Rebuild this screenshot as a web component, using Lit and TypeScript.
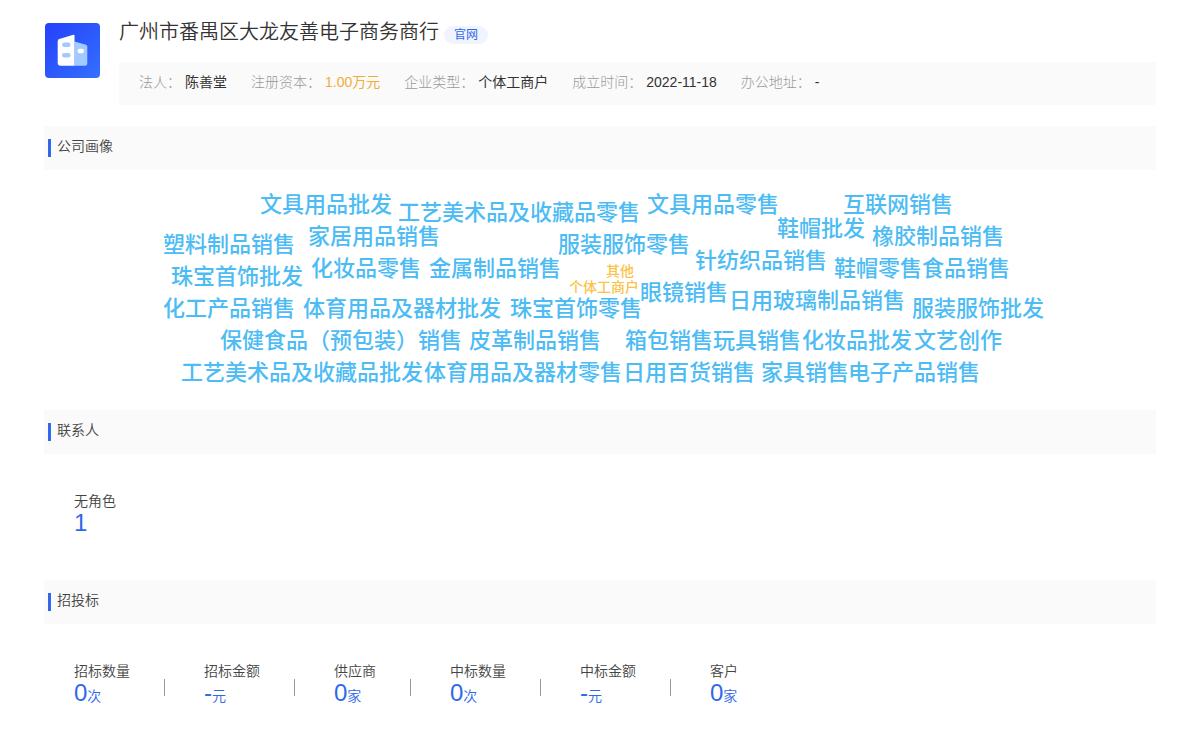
import { LitElement, html, css, svg } from "lit";
import { customElement, property } from "lit/decorators.js";
import { classMap } from "lit/directives/class-map.js";
import { styleMap } from "lit/directives/style-map.js";

interface Fact {
  label: string;
  value: string;
  accent?: boolean;
}

interface Stat {
  label: string;
  value: string;
  unit: string;
}

interface Word {
  text: string;
  x: number;
  y: number;
  small?: boolean;
}

const FACTS: Fact[] = [
  { label: "法人", value: "陈善堂" },
  { label: "注册资本", value: "1.00万元", accent: true },
  { label: "企业类型", value: "个体工商户" },
  { label: "成立时间", value: "2022-11-18" },
  { label: "办公地址", value: "-" },
];

const CONTACTS: Stat[] = [{ label: "无角色", value: "1", unit: "" }];

const BIDS: Stat[] = [
  { label: "招标数量", value: "0", unit: "次" },
  { label: "招标金额", value: "-", unit: "元" },
  { label: "供应商", value: "0", unit: "家" },
  { label: "中标数量", value: "0", unit: "次" },
  { label: "中标金额", value: "-", unit: "元" },
  { label: "客户", value: "0", unit: "家" },
];

// x is measured from the centre of the cloud, y from its top to the middle of the word.
const WORDS: Word[] = [
  { text: "文具用品批发", x: -340, y: 35 },
  { text: "工艺美术品及收藏品零售", x: -202, y: 43 },
  { text: "文具用品零售", x: 47, y: 35 },
  { text: "互联网销售", x: 243, y: 35 },
  { text: "鞋帽批发", x: 177, y: 59 },
  { text: "橡胶制品销售", x: 272, y: 67 },
  { text: "塑料制品销售", x: -437, y: 75 },
  { text: "家居用品销售", x: -292, y: 67 },
  { text: "服装服饰零售", x: -42, y: 75 },
  { text: "针纺织品销售", x: 95, y: 91 },
  { text: "鞋帽零售", x: 234, y: 99 },
  { text: "食品销售", x: 322, y: 99 },
  { text: "珠宝首饰批发", x: -429, y: 107 },
  { text: "化妆品零售", x: -289, y: 99 },
  { text: "金属制品销售", x: -171, y: 99 },
  { text: "其他", x: 6, y: 101, small: true },
  { text: "个体工商户", x: -31, y: 117, small: true },
  { text: "眼镜销售", x: 40, y: 123 },
  { text: "日用玻璃制品销售", x: 129, y: 131 },
  { text: "服装服饰批发", x: 312, y: 139 },
  { text: "化工产品销售", x: -437, y: 139 },
  { text: "体育用品及器材批发", x: -297, y: 139 },
  { text: "珠宝首饰零售", x: -90, y: 139 },
  { text: "保健食品（预包装）销售", x: -380, y: 171 },
  { text: "皮革制品销售", x: -131, y: 171 },
  { text: "箱包销售", x: 25, y: 171 },
  { text: "玩具销售", x: 113, y: 171 },
  { text: "化妆品批发", x: 202, y: 171 },
  { text: "文艺创作", x: 314, y: 171 },
  { text: "工艺美术品及收藏品批发", x: -419, y: 203 },
  { text: "体育用品及器材零售", x: -176, y: 203 },
  { text: "日用百货销售", x: 23, y: 203 },
  { text: "家具销售", x: 161, y: 203 },
  { text: "电子产品销售", x: 248, y: 203 },
];

const building = svg`
  <defs>
    <linearGradient id="tile" x1="0" y1="0" x2="1" y2="1">
      <stop offset="0" stop-color="#2440fb" />
      <stop offset="1" stop-color="#3470fd" />
    </linearGradient>
  </defs>
  <rect width="55" height="55" rx="4" fill="url(#tile)" />
  <path d="M29.500 18.500 L41 21.800 Q42.300 22.300 42.300 23.600 V40.500 Q42.300 42.700 40.100 42.700 H29.500 Z" fill="#a3caff" />
  <path d="M29.500 12.300 V42.700 H15.500 Q12.700 42.700 12.700 40 V18.300 Q12.700 16.600 14.300 16.100 L27.600 12 Q29.500 11.400 29.500 12.300 Z" fill="#fff" />
  <rect x="17" y="19.500" width="8.500" height="4.500" rx="2.250" fill="#a3caff" />
  <rect x="17" y="30" width="8.500" height="4.500" rx="2.250" fill="#a3caff" />
  <rect x="32.500" y="25.800" width="6.500" height="4.400" rx="2.200" fill="#fff" />
`;

@customElement("section-title")
class SectionTitle extends LitElement {
  static styles = css`
    :host {
      display: block;
    }
    .title {
      margin: 0;
      padding: 10px 4px 13px;
      display: flex;
      gap: 6px;
      background: #fafafa;
      color: #444;
      font-size: 14px;
      font-weight: 350;
      line-height: 20px;
    }
    .title::before {
      content: "";
      width: 3px;
      height: 18px;
      margin-top: 3px;
      background: #2f68ea;
    }
  `;
  render() {
    return html`<h2 class="title"><slot></slot></h2>`;
  }
}

@customElement("stat-list")
class StatList extends LitElement {
  @property({ attribute: false }) items: Stat[] = [];

  static styles = css`
    .list {
      margin: 0;
      padding: 36px 30px 46px;
      display: flex;
      flex-wrap: wrap;
    }
    .item {
      display: flex;
      flex-direction: column;
    }
    .item + .item {
      margin-left: 34px;
      padding-left: 40px;
      background: linear-gradient(#999, #999) 0 19px / 1px 17px no-repeat;
    }
    .label {
      color: #444;
      font-size: 14px;
      font-weight: 350;
      line-height: 22px;
    }
    .value {
      margin: 0;
      color: #2f68ea;
      font-size: 24px;
      line-height: 22px;
      font-weight: 400;
    }
    .unit {
      font-size: 14px;
      font-weight: 350;
      line-height: 14px;
    }
  `;
  render() {
    return html`
      <dl class="list">
        ${this.items.map(
          (s) => html`<div class="item">
            <dt class="label">${s.label}</dt>
            <dd class="value">${s.value}<span class="unit">${s.unit}</span></dd>
          </div>`
        )}
      </dl>
    `;
  }
}

@customElement("word-cloud")
class WordCloud extends LitElement {
  @property({ attribute: false }) words: Word[] = [];

  static styles = css`
    .cloud {
      position: relative;
      height: 240px;
    }
    .word {
      position: absolute;
      transform: translateY(-50%);
      white-space: nowrap;
      color: #4dbcf5;
      font-size: 22px;
      font-weight: 500;
      line-height: 24px;
    }
    .small {
      color: #fbc349;
      font-size: 14px;
      line-height: 16px;
    }
  `;
  render() {
    return html`<div class="cloud">
      ${this.words.map(
        (w) => html`<span
          class=${classMap({ word: true, small: !!w.small })}
          style=${styleMap({ left: `calc(50% + ${w.x}px)`, top: `${w.y}px` })}
          >${w.text}</span
        >`
      )}
    </div>`;
  }
}

@customElement("app-root")
class AppRoot extends LitElement {
  static styles = css`
    :host {
      display: block;
      padding: 18px 44px 0;
      background: #fff;
      font-family: "Liberation Sans", "Noto Sans CJK SC", sans-serif;
    }
    .header {
      display: flex;
      gap: 19px;
      margin-bottom: 21px;
    }
    .logo {
      flex: none;
      width: 55px;
      height: 55px;
      margin: 5px 0 0 1px;
    }
    .main {
      flex: 1;
    }
    .heading {
      display: flex;
      align-items: flex-start;
      gap: 5px;
      margin-bottom: 16px;
    }
    .name {
      margin: 0;
      color: #333;
      font-size: 20px;
      font-weight: 350;
      line-height: 28px;
    }
    .site {
      margin-top: 8px;
      padding: 0 10px;
      border-radius: 9px;
      background: #f0f4fe;
      color: #2f68ea;
      font-size: 12px;
      line-height: 18px;
      text-decoration: none;
    }
    .facts {
      margin: 0;
      padding: 10px 20px 13px;
      display: flex;
      flex-wrap: wrap;
      column-gap: 24px;
      background: #fafafa;
      font-size: 14px;
      line-height: 20px;
    }
    .fact {
      display: flex;
      gap: 4px;
    }
    .key {
      color: #999;
      font-weight: 300;
    }
    .val {
      margin: 0;
      color: #333;
    }
    .accent {
      color: #f0ad3c;
    }
  `;

  render() {
    return html`
      <header class="header">
        <svg class="logo" viewBox="0 0 55 55" aria-hidden="true">${building}</svg>
        <div class="main">
          <div class="heading">
            <h1 class="name">广州市番禺区大龙友善电子商务商行</h1>
            <a class="site" href="#">官网</a>
          </div>
          <dl class="facts">
            ${FACTS.map(
              (f) => html`<div class="fact">
                <dt class="key">${f.label}：</dt>
                <dd class=${classMap({ val: true, accent: !!f.accent })}>${f.value}</dd>
              </div>`
            )}
          </dl>
        </div>
      </header>
      <section>
        <section-title>公司画像</section-title>
        <word-cloud .words=${WORDS}></word-cloud>
      </section>
      <section>
        <section-title>联系人</section-title>
        <stat-list .items=${CONTACTS}></stat-list>
      </section>
      <section>
        <section-title>招投标</section-title>
        <stat-list .items=${BIDS}></stat-list>
      </section>
    `;
  }
}
